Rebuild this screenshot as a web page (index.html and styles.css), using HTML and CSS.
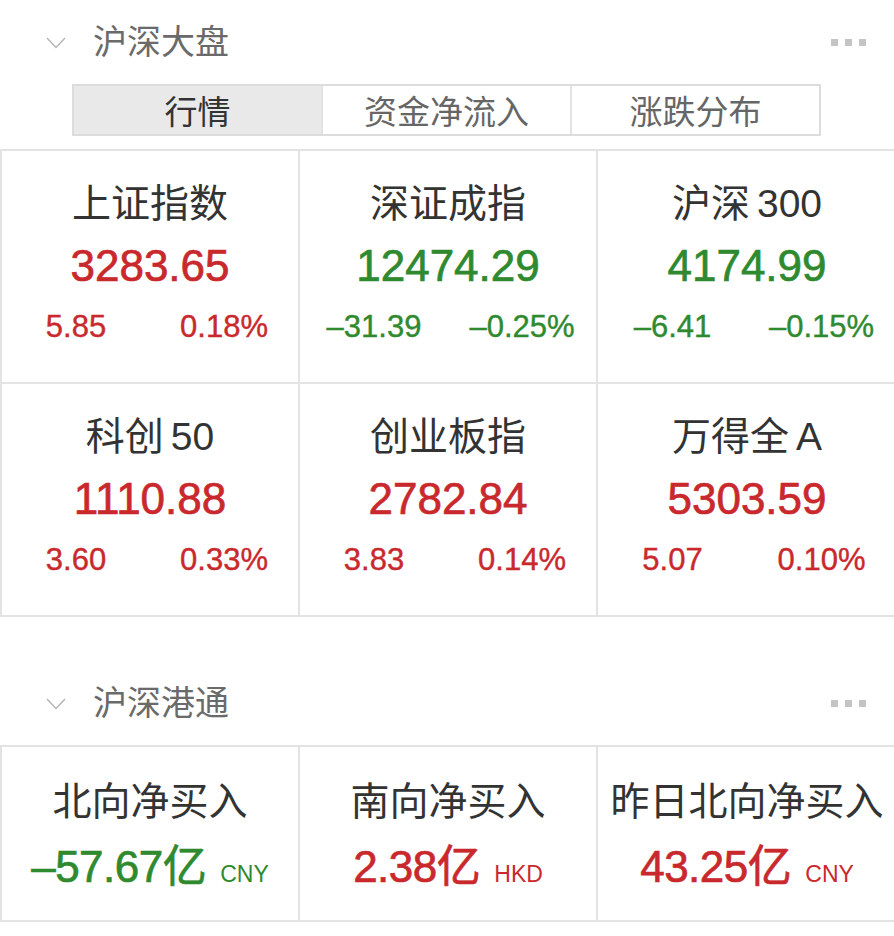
FILE: index.html
```html
<!DOCTYPE html>
<html lang="zh-CN">
<head>
<meta charset="utf-8">
<title>沪深大盘</title>
<link rel="stylesheet" href="styles.css">
</head>
<body>
<section class="panel">
  <header class="panel-head">
    <svg class="chevron" width="20" height="12" viewBox="0 0 20 12"><polyline points="1,1 10,10.5 19,1" fill="none" stroke="#b4b4b4" stroke-width="1.4"/></svg>
    <h2 class="panel-title">沪深大盘</h2>
    <div class="more"><i></i><i></i><i></i></div>
  </header>
  <nav class="tabs">
    <div class="tab active">行情</div>
    <div class="tab">资金净流入</div>
    <div class="tab">涨跌分布</div>
  </nav>
  <div class="grid">
    <div class="cell">
      <div class="name">上证指数</div>
      <div class="value up">3283.65</div>
      <div class="sub up"><span>5.85</span><span>0.18%</span></div>
    </div>
    <div class="cell">
      <div class="name">深证成指</div>
      <div class="value down">12474.29</div>
      <div class="sub down"><span>–31.39</span><span>–0.25%</span></div>
    </div>
    <div class="cell last">
      <div class="name">沪深<span class="gap"></span>300</div>
      <div class="value down">4174.99</div>
      <div class="sub down"><span>–6.41</span><span>–0.15%</span></div>
    </div>
    <div class="cell">
      <div class="name">科创<span class="gap"></span>50</div>
      <div class="value up">1110.88</div>
      <div class="sub up"><span>3.60</span><span>0.33%</span></div>
    </div>
    <div class="cell">
      <div class="name">创业板指</div>
      <div class="value up">2782.84</div>
      <div class="sub up"><span>3.83</span><span>0.14%</span></div>
    </div>
    <div class="cell last">
      <div class="name">万得全<span class="gap"></span>A</div>
      <div class="value up">5303.59</div>
      <div class="sub up"><span>5.07</span><span>0.10%</span></div>
    </div>
  </div>
</section>

<section class="panel panel-second">
  <header class="panel-head">
    <svg class="chevron" width="20" height="12" viewBox="0 0 20 12"><polyline points="1,1 10,10.5 19,1" fill="none" stroke="#b4b4b4" stroke-width="1.4"/></svg>
    <h2 class="panel-title">沪深港通</h2>
    <div class="more"><i></i><i></i><i></i></div>
  </header>
  <div class="grid grid-flow">
    <div class="cell flow-cell">
      <div class="name">北向净买入</div>
      <div class="flow down"><span class="amt">–57.67亿</span><span class="cur">CNY</span></div>
    </div>
    <div class="cell flow-cell">
      <div class="name">南向净买入</div>
      <div class="flow up"><span class="amt">2.38亿</span><span class="cur">HKD</span></div>
    </div>
    <div class="cell flow-cell last">
      <div class="name">昨日北向净买入</div>
      <div class="flow up"><span class="amt">43.25亿</span><span class="cur">CNY</span></div>
    </div>
  </div>
</section>
</body>
</html>
```

FILE: styles.css
```css
* {
  box-sizing: border-box;
}

html, body {
  margin: 0;
  padding: 0;
  background: #ffffff;
}

body {
  width: 894px;
  font-family: "Liberation Sans", "Noto Sans CJK SC", sans-serif;
  color: #333333;
  overflow: hidden;
}

.panel-second {
  margin-top: 44px;
}

.panel-head {
  height: 84px;
  display: flex;
  align-items: center;
  padding-left: 46px;
  padding-right: 28px;
}

.chevron {
  display: block;
  margin-right: 27px;
  margin-top: 1px;
}

.panel-title {
  margin: 0;
  font-size: 34px;
  font-weight: normal;
  color: #6a6a6a;
  line-height: 1;
  flex: 1;
}

.more {
  display: flex;
  gap: 7px;
}

.more i {
  display: block;
  width: 7px;
  height: 7px;
  background: #c4c4c4;
}

.tabs {
  display: flex;
  width: 749px;
  height: 52px;
  margin-left: 72px;
  border: 2px solid #dcdcdc;
}

.tab {
  flex: 1;
  display: flex;
  align-items: center;
  justify-content: center;
  font-size: 33px;
  color: #666666;
  border-left: 2px solid #e2e2e2;
}

.tab:first-child {
  border-left: none;
}

.tab.active {
  background: #e9e9e9;
  color: #333333;
}

.grid {
  margin-top: 13px;
  display: grid;
  grid-template-columns: 298px 298px 298px;
  border-top: 2px solid #e3e3e3;
  border-left: 2px solid #e3e3e3;
}

.grid-flow {
  margin-top: 0;
}

.cell {
  height: 233px;
  padding-top: 22px;
  border-right: 2px solid #e3e3e3;
  border-bottom: 2px solid #e3e3e3;
  text-align: center;
}

.cell.last {
  border-right: none;
}

.name {
  font-size: 39px;
  line-height: 62px;
  color: #333333;
  white-space: nowrap;
}

.gap {
  display: inline-block;
  width: 7px;
}

.value {
  font-size: 44px;
  line-height: 62px;
  -webkit-text-stroke: 0.7px currentColor;
}

.sub {
  display: flex;
  font-size: 31px;
  line-height: 60px;
  -webkit-text-stroke: 0.4px currentColor;
}

.sub span {
  flex: 1;
  text-align: center;
}

.up {
  color: #c9292d;
}

.down {
  color: #2f8a2f;
}

.flow-cell {
  height: 175px;
  padding-top: 24px;
}

.flow {
  line-height: 68px;
  white-space: nowrap;
}

.amt {
  font-size: 44px;
  letter-spacing: -0.5px;
  -webkit-text-stroke: 0.7px currentColor;
}

.cur {
  font-size: 23px;
  margin-left: 14px;
}
```
